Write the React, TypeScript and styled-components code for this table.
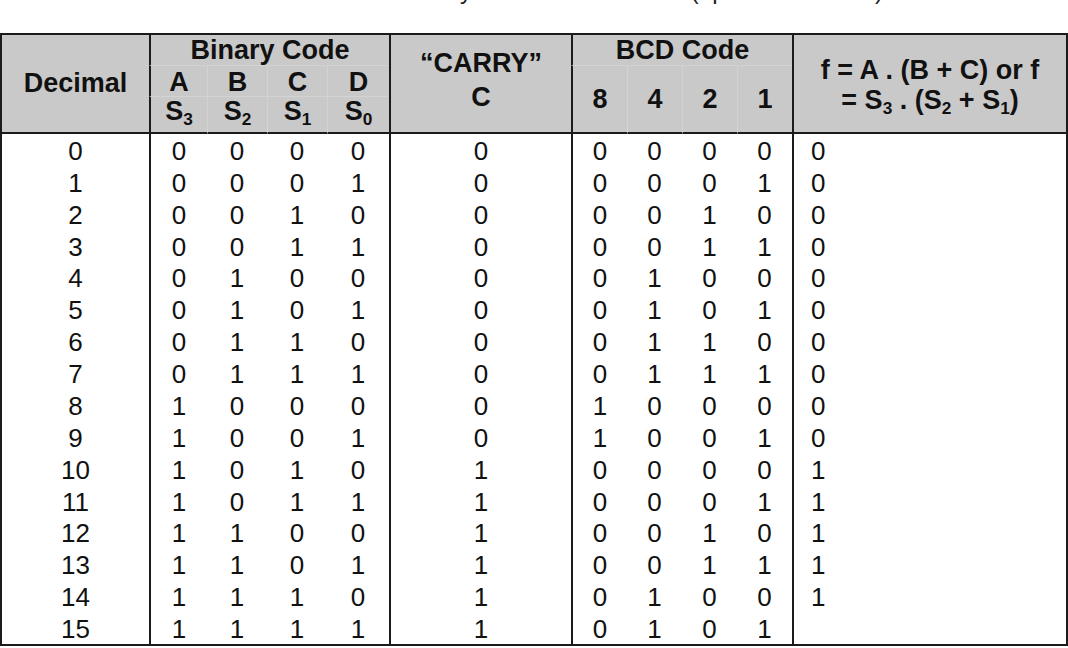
import React from 'react';
import styled, { createGlobalStyle } from 'styled-components';

const GlobalStyle = createGlobalStyle`
  html, body {
    margin: 0;
    padding: 0;
    background: #ffffff;
  }
  body {
    font-family: "Liberation Sans", Arial, Helvetica, sans-serif;
    color: #111111;
  }
`;

const Page = styled.div`
  width: 1068px;
  height: 648px;
  overflow: hidden;
  display: flex;
  flex-direction: column;
`;

// only the descenders of the caption line survive the crop at the top edge
const CaptionStrip = styled.div`
  height: 33px;
  flex-shrink: 0;
`;

const CaptionClip = styled.div`
  height: 4px;
  overflow: hidden;
  display: flex;
  align-items: flex-end;
  padding-left: 244px;
`;

const CaptionText = styled.span`
  font-size: 24px;
  line-height: 26px;
  white-space: nowrap;
  color: #222222;
`;

const Table = styled.table`
  width: 1068px;
  border-collapse: separate;
  border-spacing: 0;
  table-layout: fixed;
  border: 2px solid #1b1b1b;
  flex-shrink: 0;
`;

const Col = styled.col<{ $w: number }>`
  width: ${(p) => p.$w}px;
`;

const HeadRow = styled.tr<{ $h: number }>`
  height: ${(p) => p.$h}px;
`;

const HeadCell = styled.th<{
  $lead?: boolean;
  $sub?: boolean;
  $base?: boolean;
  $split?: boolean;
  $pt?: number;
  $pb?: number;
  $lh?: number;
}>`
  background: #c9c9c9;
  font-size: 27px;
  font-weight: bold;
  line-height: ${(p) => p.$lh ?? 27}px;
  text-align: center;
  vertical-align: middle;
  white-space: nowrap;
  padding: ${(p) => p.$pt ?? 0}px 0 ${(p) => p.$pb ?? 0}px 0;
  border-left: ${(p) =>
    p.$lead ? '2px solid #1b1b1b' : p.$sub ? '1px solid #d3d3d3' : 'none'};
  border-bottom: ${(p) =>
    p.$base ? '2px solid #1b1b1b' : p.$split ? '1px solid #d3d3d3' : 'none'};
`;

const Sub = styled.sub`
  font-size: 0.64em;
  line-height: 0;
  vertical-align: -0.28em;
`;

const BodyRow = styled.tr`
  height: 31.875px;
`;

const BodyCell = styled.td<{ $lead?: boolean; $left?: boolean }>`
  font-size: 26px;
  line-height: 28px;
  text-align: ${(p) => (p.$left ? 'left' : 'center')};
  vertical-align: middle;
  padding: 2px 0 0 ${(p) => (p.$left ? 17 : 0)}px;
  border-left: ${(p) => (p.$lead ? '2px solid #1b1b1b' : 'none')};
`;

type Row = {
  dec: number;
  bin: number[];
  carry: number;
  bcd: number[];
  f: string;
};

const bits = (n: number) => [3, 2, 1, 0].map((i) => (n >> i) & 1);

const rows: Row[] = Array.from({ length: 16 }, (_, n) => ({
  dec: n,
  bin: bits(n),
  carry: n >= 10 ? 1 : 0,
  bcd: bits(n % 10),
  f: n === 15 ? '' : n >= 10 ? '1' : '0',
}));

const colWidths = [147, 58, 60, 60, 62, 182, 56, 55, 55, 55, 274];

export default function App() {
  return (
    <Page>
      <GlobalStyle />
      <CaptionStrip>
        <CaptionClip>
          <CaptionText>
            Truth Table for Binary to BCD Conversion (up to 15 decimal)
          </CaptionText>
        </CaptionClip>
      </CaptionStrip>
      <Table>
        <colgroup>
          {colWidths.map((w, i) => (
            <Col key={i} $w={w} />
          ))}
        </colgroup>
        <thead>
          <HeadRow $h={31}>
            <HeadCell rowSpan={3} $base>
              Decimal
            </HeadCell>
            <HeadCell colSpan={4} $lead $split>
              Binary Code
            </HeadCell>
            <HeadCell rowSpan={3} $lead $base $lh={34} $pb={7}>
              “CARRY”
              <br />C
            </HeadCell>
            <HeadCell colSpan={4} $lead $split>
              BCD Code
            </HeadCell>
            <HeadCell rowSpan={3} $lead $base $lh={30} $pt={3}>
              f = A . (B + C) or f
              <br />= S<Sub>3</Sub> . (S<Sub>2</Sub> + S<Sub>1</Sub>)
            </HeadCell>
          </HeadRow>
          <HeadRow $h={31}>
            {['A', 'B', 'C', 'D'].map((l, i) => (
              <HeadCell key={l} $lead={i === 0} $sub={i > 0} $split $pt={3}>
                {l}
              </HeadCell>
            ))}
            {['8', '4', '2', '1'].map((l, i) => (
              <HeadCell key={l} rowSpan={2} $lead={i === 0} $sub={i > 0} $base>
                {l}
              </HeadCell>
            ))}
          </HeadRow>
          <HeadRow $h={37}>
            {[3, 2, 1, 0].map((s, i) => (
              <HeadCell key={s} $lead={i === 0} $sub={i > 0} $base $pb={7}>
                S<Sub>{s}</Sub>
              </HeadCell>
            ))}
          </HeadRow>
        </thead>
        <tbody>
          {rows.map((r) => (
            <BodyRow key={r.dec}>
              <BodyCell>{r.dec}</BodyCell>
              {r.bin.map((b, i) => (
                <BodyCell key={`b${i}`} $lead={i === 0}>
                  {b}
                </BodyCell>
              ))}
              <BodyCell $lead>{r.carry}</BodyCell>
              {r.bcd.map((b, i) => (
                <BodyCell key={`c${i}`} $lead={i === 0}>
                  {b}
                </BodyCell>
              ))}
              <BodyCell $lead $left>
                {r.f}
              </BodyCell>
            </BodyRow>
          ))}
        </tbody>
      </Table>
    </Page>
  );
}
